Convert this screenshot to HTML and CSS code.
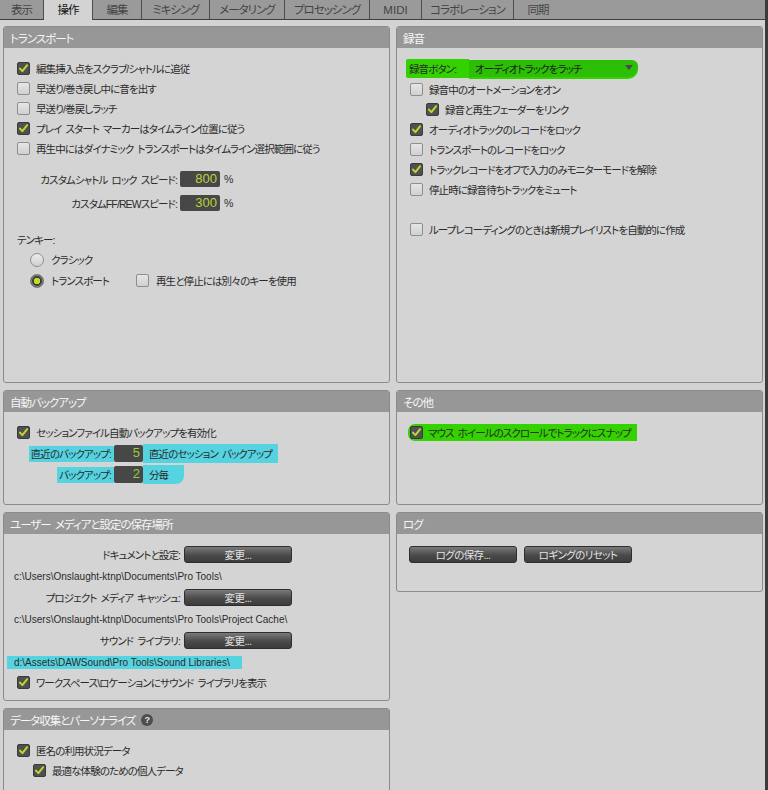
FILE: index.html
```html
<!DOCTYPE html>
<html lang="ja">
<head>
<meta charset="UTF-8">
<title>環境設定 - 操作</title>
<link rel="stylesheet" href="styles.css">
</head>
<body>

<div class="tabs">
    <div class="tab tab-view">表示</div>
    <div class="tab tab-ops active">操作</div>
    <div class="tab tab-edit">編集</div>
    <div class="tab tab-mix">ミキシング</div>
    <div class="tab tab-meter">メータリング</div>
    <div class="tab tab-proc">プロセッシング</div>
    <div class="tab tab-midi">MIDI</div>
    <div class="tab tab-collab">コラボレーション</div>
    <div class="tab tab-sync">同期</div>
</div>

<div class="settings">

    <!-- トランスポート -->
    <div class="panel">
        <div class="panel-head">トランスポート</div>
        <div class="panel-body transport">
            <div class="row"><span class="cb on"><svg viewBox="0 0 13 13"><path d="M2.4 6.6l2.8 3 5.6-7"/></svg></span><span>編集挿入点をスクラブ/シャトルに追従</span></div>
            <div class="row"><span class="cb"></span><span>早送り/巻き戻し中に音を出す</span></div>
            <div class="row"><span class="cb"></span><span>早送り/巻戻しラッチ</span></div>
            <div class="row"><span class="cb on"><svg viewBox="0 0 13 13"><path d="M2.4 6.6l2.8 3 5.6-7"/></svg></span><span>プレイ スタート マーカーはタイムライン位置に従う</span></div>
            <div class="row"><span class="cb"></span><span>再生中にはダイナミック トランスポートはタイムライン選択範囲に従う</span></div>

            <div class="speeds">
                <div class="field"><span class="field-label">カスタムシャトル ロック スピード:</span><span class="num">800</span><span class="unit">%</span></div>
                <div class="field"><span class="field-label">カスタムFF/REWスピード:</span><span class="num">300</span><span class="unit">%</span></div>
            </div>

            <div class="row tenkey">テンキー:</div>
            <div class="row radio-row"><span class="radio"></span><span>クラシック</span></div>
            <div class="row radio-row">
                <span class="radio-item"><span class="radio on"></span><span>トランスポート</span></span>
                <span class="cb"></span><span>再生と停止には別々のキーを使用</span>
            </div>
        </div>
    </div>

    <!-- 録音 -->
    <div class="panel">
        <div class="panel-head">録音</div>
        <div class="panel-body">
            <div class="row rec-button">
                <span class="hl-green rec-label">録音ボタン:</span>
                <span class="dropdown">オーディオトラックをラッチ<span class="arrow"></span></span>
            </div>
            <div class="row"><span class="cb"></span><span>録音中のオートメーションをオン</span></div>
            <div class="row indent"><span class="cb on"><svg viewBox="0 0 13 13"><path d="M2.4 6.6l2.8 3 5.6-7"/></svg></span><span>録音と再生フェーダーをリンク</span></div>
            <div class="row"><span class="cb on"><svg viewBox="0 0 13 13"><path d="M2.4 6.6l2.8 3 5.6-7"/></svg></span><span>オーディオトラックのレコードをロック</span></div>
            <div class="row"><span class="cb"></span><span>トランスポートのレコードをロック</span></div>
            <div class="row"><span class="cb on"><svg viewBox="0 0 13 13"><path d="M2.4 6.6l2.8 3 5.6-7"/></svg></span><span>トラックレコードをオフで入力のみモニターモードを解除</span></div>
            <div class="row"><span class="cb"></span><span>停止時に録音待ちトラックをミュート</span></div>
            <div class="row loop"><span class="cb"></span><span>ループレコーディングのときは新規プレイリストを自動的に作成</span></div>
        </div>
    </div>

    <!-- 自動バックアップ -->
    <div class="panel">
        <div class="panel-head">自動バックアップ</div>
        <div class="panel-body backup">
            <div class="row"><span class="cb on"><svg viewBox="0 0 13 13"><path d="M2.4 6.6l2.8 3 5.6-7"/></svg></span><span>セッションファイル自動バックアップを有効化</span></div>
            <div class="row backup-row">
                <span class="backup-label"><span class="hl-cyan">直近のバックアップ:</span></span>
                <span class="num small">5</span>
                <span class="hl-cyan suffix">直近のセッション バックアップ</span>
            </div>
            <div class="row backup-row">
                <span class="backup-label"><span class="hl-cyan">バックアップ:</span></span>
                <span class="num small">2</span>
                <span class="hl-cyan suffix short">分毎</span>
            </div>
        </div>
    </div>

    <!-- その他 -->
    <div class="panel">
        <div class="panel-head">その他</div>
        <div class="panel-body backup">
            <div class="row"><span class="hl-green snap"><span class="cb on"><svg viewBox="0 0 13 13"><path d="M2.4 6.6l2.8 3 5.6-7"/></svg></span><span>マウス ホイールのスクロールでトラックにスナップ</span></span></div>
        </div>
    </div>

    <!-- 保存場所 -->
    <div class="panel">
        <div class="panel-head">ユーザー メディアと設定の保存場所</div>
        <div class="panel-body media">
            <div class="path-field"><span class="path-label">ドキュメントと設定:</span><button class="btn wide">変更...</button></div>
            <div class="path">c:\Users\Onslaught-ktnp\Documents\Pro Tools\</div>
            <div class="path-field"><span class="path-label">プロジェクト メディア キャッシュ:</span><button class="btn wide">変更...</button></div>
            <div class="path">c:\Users\Onslaught-ktnp\Documents\Pro Tools\Project Cache\</div>
            <div class="path-field"><span class="path-label">サウンド ライブラリ:</span><button class="btn wide">変更...</button></div>
            <div class="path"><span class="hl-cyan lib">d:\Assets\DAWSound\Pro Tools\Sound Libraries\</span></div>
            <div class="row"><span class="cb on"><svg viewBox="0 0 13 13"><path d="M2.4 6.6l2.8 3 5.6-7"/></svg></span><span>ワークスペース\ロケーションにサウンド ライブラリを表示</span></div>
        </div>
    </div>

    <!-- ログ -->
    <div class="panel log">
        <div class="panel-head">ログ</div>
        <div class="panel-body log-body">
            <button class="btn wide">ログの保存...</button>
            <button class="btn wide">ロギングのリセット</button>
        </div>
    </div>

    <!-- データ収集 -->
    <div class="panel data">
        <div class="panel-head">データ収集とパーソナライズ <span class="help">?</span></div>
        <div class="panel-body data-body">
            <div class="row"><span class="cb on"><svg viewBox="0 0 13 13"><path d="M2.4 6.6l2.8 3 5.6-7"/></svg></span><span>匿名の利用状況データ</span></div>
            <div class="row indent"><span class="cb on"><svg viewBox="0 0 13 13"><path d="M2.4 6.6l2.8 3 5.6-7"/></svg></span><span>最適な体験のための個人データ</span></div>
        </div>
    </div>

</div>

</body>
</html>
```

FILE: styles.css
```css
* {
    box-sizing: border-box;
}

body {
    margin: 0;
    width: 768px;
    height: 790px;
    overflow: hidden;
    background-color: #d3d3d3;
    border-right: 3px solid #3b3b3b;
    font-family: "Liberation Sans", "Noto Sans CJK JP", sans-serif;
    font-size: 10.5px;
    letter-spacing: -0.9px;
    word-spacing: 2px;
    font-feature-settings: "palt";
    color: #2b2b2b;
}

/* tab strip */
.tabs {
    display: flex;
    height: 20px;
    background-color: #9a9a9a;
    border-bottom: 1px solid #3f3f3f;
}

.tab {
    height: 19px;
    padding-top: 3px;
    text-align: center;
    font-size: 11.5px;
    letter-spacing: -1px;
    line-height: 14px;
    color: #444;
    border-right: 1px solid #4d4d4d;
}

.tab.active {
    height: 20px;
    background-color: #d3d3d3;
    color: #111;
}

.tab-view { width: 44px; }
.tab-ops { width: 49px; }
.tab-edit { width: 49px; }
.tab-mix { width: 68px; }
.tab-meter { width: 75px; }
.tab-proc { width: 85px; }
.tab-midi { width: 52px; letter-spacing: 0; }
.tab-collab { width: 92px; }
.tab-sync { width: 48px; border-right: none; }

/* panels */
.settings {
    display: grid;
    grid-template-columns: 387px 367px;
    grid-template-rows: 357px 115px 189px auto;
    column-gap: 6px;
    row-gap: 7px;
    padding: 6px 0 0 3px;
}

.panel {
    background-color: #d4d4d4;
    border: 1px solid #8b8b8b;
    border-radius: 3px;
    overflow: hidden;
}

.panel-head {
    display: flex;
    align-items: center;
    height: 21px;
    padding-left: 6px;
    background-color: #979797;
    color: #f6f6f6;
    font-size: 11.5px;
    letter-spacing: -1px;
}

.panel-body {
    padding: 10px 13px 0 13px;
}

.row {
    display: flex;
    align-items: center;
    gap: 6px;
    height: 20px;
    white-space: nowrap;
}

.indent {
    padding-left: 16px;
}

/* checkbox */
.cb {
    flex: none;
    width: 13px;
    height: 13px;
    border: 1px solid #8e8e8e;
    border-radius: 2px;
    background: linear-gradient(#e6e6e6, #d0d0d0);
}

.cb.on {
    background: #505050;
    border-color: #3a3a3a;
}

.cb svg {
    display: block;
    width: 11px;
    height: 11px;
}

.cb path {
    fill: none;
    stroke: #bcd830;
    stroke-width: 2.4;
    stroke-linecap: round;
    stroke-linejoin: round;
}

/* radio */
.radio {
    flex: none;
    width: 14px;
    height: 14px;
    border: 1px solid #8e8e8e;
    border-radius: 50%;
    background: linear-gradient(#ececec, #cfcfcf);
}

.radio.on {
    background: radial-gradient(circle, #c2dc1f 0 3px, #3c3c3c 3.5px 100%);
    border-color: #777;
    box-shadow: inset 0 0 0 1px #8a8a8a;
}

.radio-row {
    padding-left: 13px;
    gap: 7px;
    height: 21px;
}

.radio-item {
    display: flex;
    align-items: center;
    gap: 7px;
    width: 99px;
}

.tenkey {
    margin-top: 14px;
}

/* numeric fields */
.speeds {
    margin-top: 9px;
}

.field {
    display: flex;
    align-items: center;
    height: 24px;
}

.field-label {
    width: 160px;
    text-align: right;
    margin-right: 3px;
}

.num {
    width: 40px;
    height: 16px;
    padding-right: 3px;
    background-color: #474747;
    border-radius: 2px;
    color: #b8d43a;
    font-size: 13px;
    letter-spacing: 0;
    line-height: 16px;
    text-align: right;
}

.num.small {
    width: 29px;
    height: 17px;
    color: #9ccc3a;
}

.unit {
    margin-left: 4px;
}

/* marker highlights */
.hl-green {
    background-color: #33d200;
}

.hl-cyan {
    background-color: #55d3e0;
}

/* recording */
.panel-body .rec-button {
    margin-left: -4px;
    gap: 0;
    height: 21px;
}

.rec-label {
    width: 63px;
    padding: 2px 0 2px 3px;
    border-radius: 2px 0 0 2px;
}

.dropdown {
    position: relative;
    width: 169px;
    height: 17px;
    padding: 1px 0 0 6px;
    background-color: #2cbf06;
    border-radius: 0 6px 10px 0;
    box-shadow: 0 2px 0 #33d200;
    color: #1a1a1a;
}

.arrow {
    position: absolute;
    right: 5px;
    top: 5px;
    border-left: 4px solid transparent;
    border-right: 4px solid transparent;
    border-top: 5px solid #4a4a4a;
}

.loop {
    margin-top: 20px;
}

/* backup */
.backup .row {
    height: 21px;
}

.backup-row {
    gap: 0;
}

.backup-label {
    width: 97px;
    text-align: right;
}

.backup-label .hl-cyan {
    padding: 2px 3px 2px 2px;
}

.suffix {
    padding: 2px 6px 2px 6px;
}

.suffix.short {
    padding-right: 16px;
    border-radius: 0 0 8px 0;
}

.snap {
    display: flex;
    align-items: center;
    gap: 5px;
    margin-left: -2px;
    padding: 1px 6px 1px 2px;
    border-radius: 7px 0 0 7px;
}

/* storage locations */
.media {
    padding-top: 9px;
}

.path-field {
    display: flex;
    align-items: center;
    height: 23px;
}

.path-label {
    width: 163px;
    text-align: right;
    margin-right: 4px;
}

.path {
    display: flex;
    align-items: center;
    height: 20px;
    margin-left: -3px;
    font-size: 10px;
    letter-spacing: 0;
    word-spacing: 0;
    white-space: nowrap;
}

.lib {
    margin-left: -7px;
    padding: 1px 12px 1px 7px;
}

/* buttons */
.btn {
    height: 17px;
    padding: 0;
    border: 1px solid #2e2e2e;
    border-radius: 3px;
    background: linear-gradient(#7a7a7a, #4a4a4a 55%, #3c3c3c);
    color: #e2e2e2;
    font-family: inherit;
    font-size: 10.5px;
    letter-spacing: -0.6px;
    font-feature-settings: "palt";
}

.btn.wide {
    width: 108px;
}

.log {
    align-self: start;
    height: 80px;
}

.log-body {
    display: flex;
    gap: 7px;
    padding: 12px 12px 0 12px;
}

/* data collection */
.data {
    height: 100px;
}

.help {
    display: inline-flex;
    align-items: center;
    justify-content: center;
    width: 12px;
    height: 12px;
    margin-left: 6px;
    border-radius: 50%;
    background-color: #4d4d4d;
    color: #e8e8e8;
    font-size: 9px;
    font-weight: bold;
    letter-spacing: 0;
}
```
